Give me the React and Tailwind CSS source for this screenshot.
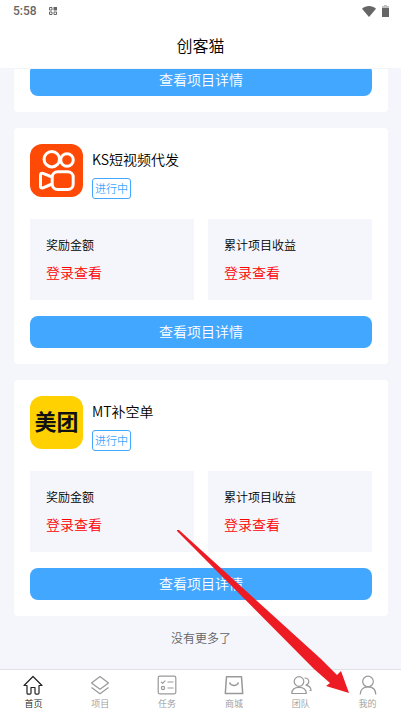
const font = "font-['Noto_Sans_CJK_SC',sans-serif] font-[350]";

function KuaishouLogo() {
  return (
    <svg viewBox="0 0 53 53" className="size-[53px] shrink-0" fill="none" aria-hidden="true">
      <rect width="53" height="53" rx="12" fill="#ff4906" />
      <g stroke="#fff" strokeWidth="3">
        <circle cx="21.8" cy="15.2" r="7.7" />
        <circle cx="37" cy="16" r="6.3" />
        <rect x="22.2" y="27.7" width="21" height="17.8" rx="5.5" />
        <path d="M22 33 13 29.4Q10.5 28.7 10.5 31.2V42.2Q10.5 44.6 13 43.9L22 40" strokeLinejoin="round" />
      </g>
    </svg>
  );
}

function MeituanLogo() {
  return (
    <span className="flex size-[53px] shrink-0 items-center justify-center rounded-xl bg-[#ffd100] pb-1.5 text-[22px] leading-none font-bold text-[#111]">
      美团
    </span>
  );
}

const projects = [
  { id: 1 },
  { id: 2, name: "KS短视频代发", Logo: KuaishouLogo },
  { id: 3, name: "MT补空单", Logo: MeituanLogo },
];

const tabs = [
  {
    label: "首页",
    active: true,
    icon: <path d="M1 10.5 10 1.5l9 9h-3V18a1.2 1.2 0 0 1-1.2 1.2h-1.6A1.2 1.2 0 0 1 12 18v-5.5H8V18a1.2 1.2 0 0 1-1.2 1.2H5.2A1.2 1.2 0 0 1 4 18v-7.5Z" />,
  },
  {
    label: "项目",
    icon: (
      <>
        <path d="M10 1.5 18.5 8 10 14.2 1.5 8Z" />
        <path d="m1.5 12.5 8.5 6.3 8.5-6.3" />
      </>
    ),
  },
  {
    label: "任务",
    icon: (
      <>
        <rect x="1.2" y="1.2" width="17.6" height="17.6" rx="1.5" />
        <path d="m4 6.8 1.6 1.6L8.4 5.6M10.5 7h6M10.5 13h6" />
        <circle cx="6" cy="13" r="1.6" />
      </>
    ),
  },
  {
    label: "商城",
    icon: (
      <>
        <path d="M2.5 1.8h15l1.2 16.8H1.3Z" strokeWidth="1.5" />
        <path d="M5.5 7.5c1.6 4 7.4 4 9 0" strokeWidth="1.5" />
      </>
    ),
  },
  {
    label: "团队",
    icon: (
      <>
        <circle cx="8" cy="6.5" r="4.8" />
        <path d="M.8 18.5c0-4 3-6.2 7.2-6.2s7.2 2.2 7.2 6.2Z" />
        <path d="M13.5 3c2.5-.2 4.3 1.3 4.3 3.6 0 1.8-1.2 3-2.8 3.5 3 .6 5 2.6 5 5.4h-1.5" />
      </>
    ),
  },
  {
    label: "我的",
    icon: (
      <>
        <circle cx="10" cy="6.5" r="5.3" />
        <path d="M2.2 19.5c0-4.8 3-7.7 7.8-7.7s7.8 2.9 7.8 7.7" />
      </>
    ),
  },
];

function StatusBar() {
  return (
    <div className="flex h-[22px] items-center justify-between pr-3 pl-[13px] text-[#666]">
      <div className="flex items-center gap-3">
        <span className="font-['Roboto',sans-serif] text-xs leading-4 font-medium">5:58</span>
        <svg viewBox="0 0 8 8" className="size-2" fill="none" stroke="currentColor" aria-hidden="true">
          <path d="M.5.5h2.5v2.5H.5zM.5 5h2.5v2.5H.5zM5 5h2.5v2.5H5z" />
          <path d="M4.5 0H8v3.5H4.5z" fill="currentColor" stroke="none" />
        </svg>
      </div>
      <div className="flex items-center gap-1.5">
        <svg viewBox="0 0 14 11" className="h-[11px] w-3.5" fill="currentColor" aria-hidden="true">
          <path d="M7 11 0 2.8C4-.9 10-.9 14 2.8Z" />
        </svg>
        <svg viewBox="0 0 7 12" className="h-3 w-[7px]" fill="currentColor" aria-hidden="true">
          <path d="M2 0h3v1h2v3H0V1h2Z" opacity=".4" />
          <path d="M0 3h7v9H0z" />
        </svg>
      </div>
    </div>
  );
}

function Stat({ label }) {
  return (
    <div className="bg-[#f5f6fb] p-4">
      <dt className="text-xs leading-5 text-black">{label}</dt>
      <dd className="mt-1.5 text-sm leading-[23px] text-[#ff0000]">登录查看</dd>
    </div>
  );
}

function ProjectCard({ name, Logo }) {
  return (
    <article className="rounded bg-white p-4">
      {name && (
        <>
          <div className="flex gap-[9px]">
            <Logo />
            <div className="flex flex-col items-start pt-1">
              <h2 className="text-sm leading-[22px] text-black">{name}</h2>
              <span className="mt-2 rounded-[3px] border border-[#42a7ff] px-0.5 text-[11px] leading-[19px] text-[#42a7ff]">
                进行中
              </span>
            </div>
          </div>
          <dl className="mt-5 mb-4 grid grid-cols-2 gap-3.5">
            <Stat label="奖励金额" />
            <Stat label="累计项目收益" />
          </dl>
        </>
      )}
      <button type="button" className="block h-8 w-full rounded-lg bg-[#42a7ff] pb-0.5 text-sm text-white">
        查看项目详情
      </button>
    </article>
  );
}

export default function App() {
  return (
    <div className={`relative flex h-screen flex-col bg-[#f5f6fb] ${font}`}>
      <header className="z-10 shrink-0 border-b border-gray-100 bg-white">
        <StatusBar />
        <h1 className="py-[11px] text-center text-base leading-6 text-black">创客猫</h1>
      </header>

      {/* reversed column keeps the list scrolled to its end */}
      <main className="flex min-h-0 flex-1 flex-col-reverse overflow-y-auto [scrollbar-width:none]">
        <div className="shrink-0 pr-[13px] pl-3.5">
          <div className="flex flex-col gap-4">
            {projects.map((p) => (
              <ProjectCard key={p.id} name={p.name} Logo={p.Logo} />
            ))}
          </div>
          <p className="pt-3 pb-[21px] text-center text-xs leading-5 text-[#606266]">没有更多了</p>
        </div>
      </main>

      <nav className="grid shrink-0 grid-cols-6 border-t border-[#dfe1e6] bg-white pt-[5px] pb-1">
        {tabs.map(({ label, icon, active }) => (
          <a
            key={label}
            href="#"
            aria-current={active ? "page" : undefined}
            className={`flex flex-col items-center gap-0.5 text-[9px] leading-[13px] ${active ? "text-[#222]" : "text-[#999]"}`}
          >
            <svg viewBox="0 0 20 20" className="size-5 overflow-visible" fill="none" stroke="currentColor" strokeWidth="1.2" strokeLinejoin="round" aria-hidden="true">
              {icon}
            </svg>
            {label}
          </a>
        ))}
      </nav>

      {/* pointer to the profile tab */}
      <svg
        viewBox="0 0 172 163"
        className="pointer-events-none absolute right-[52px] bottom-[21px] z-20 h-[163px] w-[172px]"
        fill="#ed1c24"
        aria-hidden="true"
      >
        <path d="M0 0 2 0 144 129 160 145 164 141 172 163 149 156 153 153 137 139 0 1Z" />
      </svg>
    </div>
  );
}
